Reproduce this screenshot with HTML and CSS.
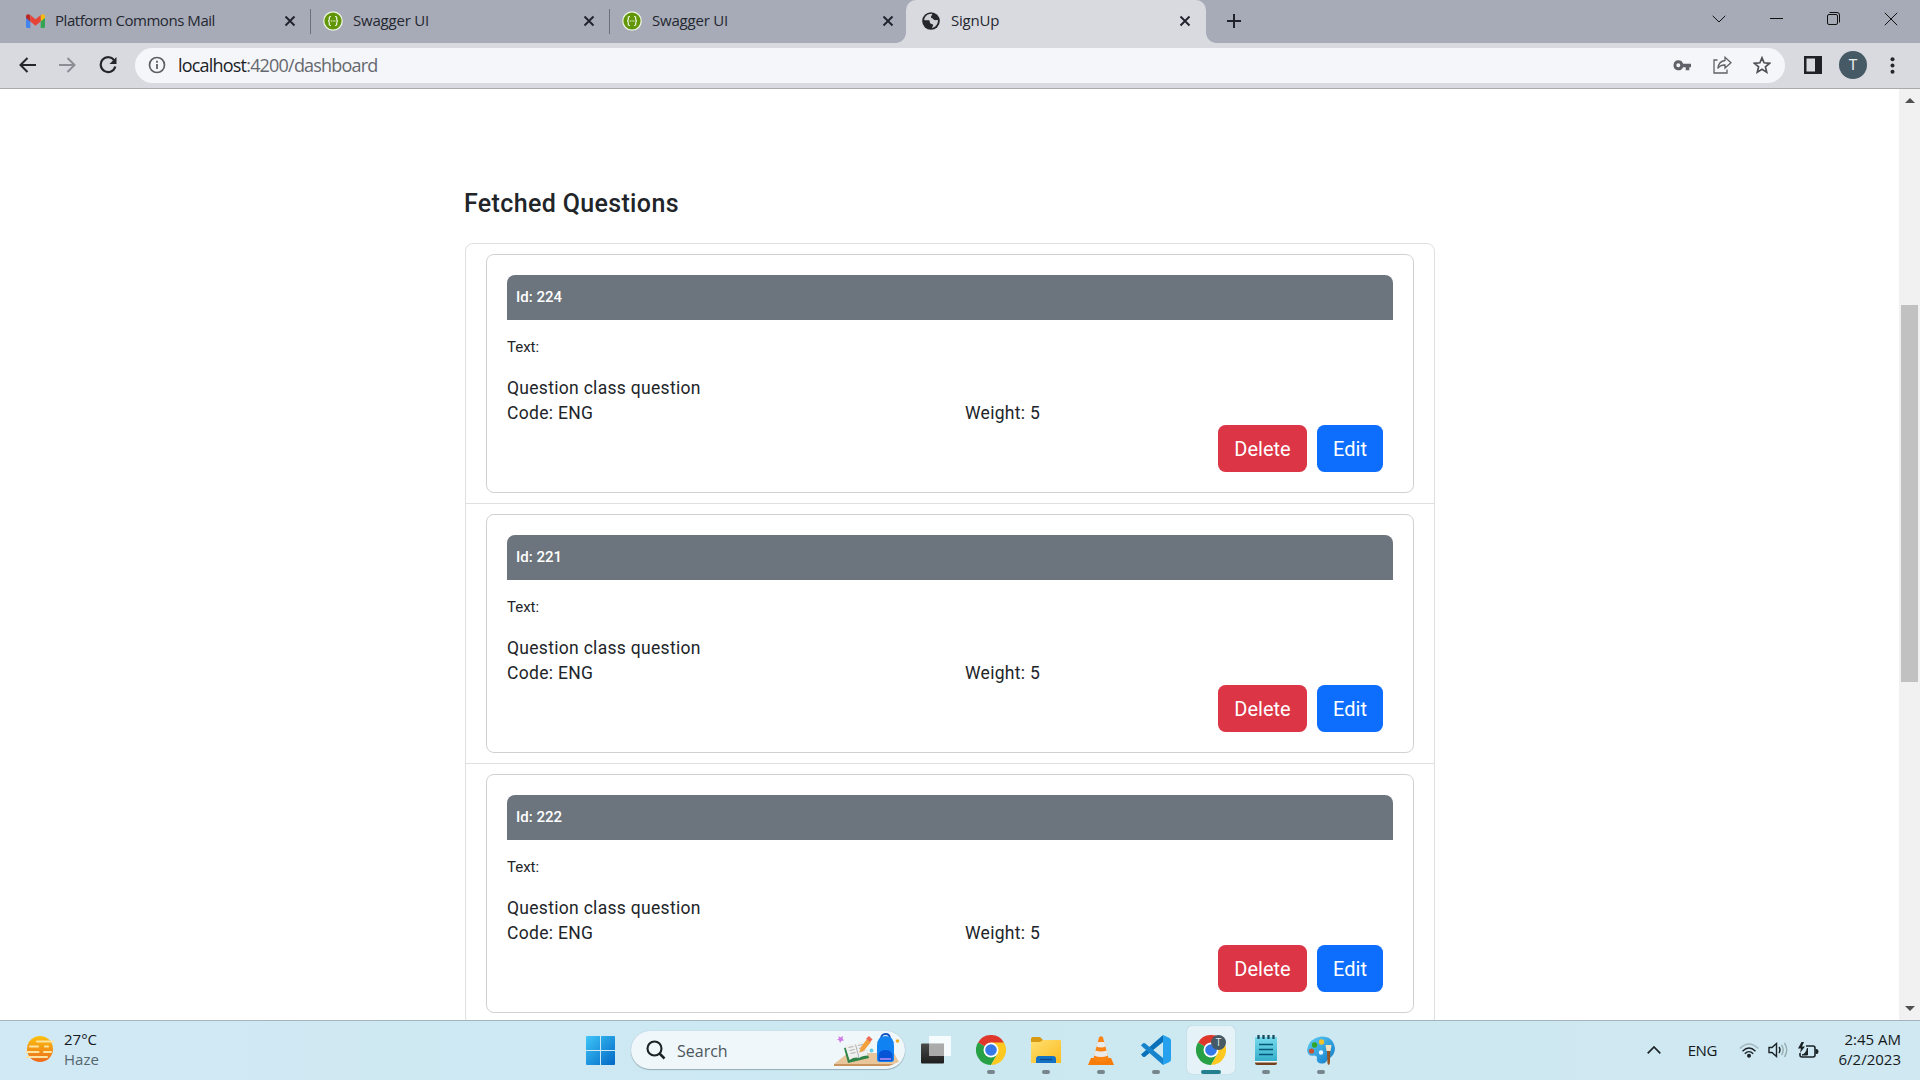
FILE: index.html
```html
<!DOCTYPE html>
<html lang="en">
<head>
<meta charset="utf-8">
<title>SignUp</title>
<link rel="stylesheet" href="styles.css">
</head>
<body>
<svg width="0" height="0" class="defs">
  <defs>
    <linearGradient id="win" gradientUnits="userSpaceOnUse" x1="0" y1="0" x2="29" y2="29"><stop offset="0" stop-color="#3fc5f8"/><stop offset="1" stop-color="#0067c5"/></linearGradient>
    <linearGradient id="sun" x1="0" y1="0" x2="0" y2="1"><stop offset="0" stop-color="#fbc10c"/><stop offset="1" stop-color="#ec6a1c"/></linearGradient>
    <linearGradient id="fold" x1="0" y1="0" x2="1" y2="1"><stop offset="0" stop-color="#ffdf70"/><stop offset="1" stop-color="#fbbd21"/></linearGradient>
    <linearGradient id="note" x1="0" y1="0" x2="0" y2="1"><stop offset="0" stop-color="#77daec"/><stop offset="1" stop-color="#35afcb"/></linearGradient>
    <linearGradient id="pal" x1="0" y1="0" x2="1" y2="1"><stop offset="0" stop-color="#5fd0f3"/><stop offset="1" stop-color="#0d78c9"/></linearGradient>
    <linearGradient id="dark" x1="0" y1="0" x2="0" y2="1"><stop offset="0" stop-color="#4a4a4a"/><stop offset="1" stop-color="#1e1e1e"/></linearGradient>
    <symbol id="close" viewBox="0 0 12 12"><path d="M1.500 1.500l9 9M10.500 1.500l-9 9" stroke="#20232c" stroke-width="1.900" fill="none"/></symbol>
    <symbol id="swagger" viewBox="0 0 20 20"><circle cx="10" cy="10" r="9.800" fill="#eef5e2"/><circle cx="10" cy="10" r="8.600" fill="#619608"/><path d="M8 5.500c-2 0-1.700 1-1.700 2.500S5.800 10 5 10c.8 0 1.300.5 1.300 2s-.3 2.500 1.700 2.500M12 5.500c2 0 1.700 1 1.700 2.500s.5 2 1.300 2c-.8 0-1.300.5-1.300 2s.3 2.500-1.700 2.500" fill="none" stroke="#f4f9ea" stroke-width="1.200"/><path d="M7.700 10h1.200m.6 0h1.200m.6 0h1.200" stroke="#f4f9ea" stroke-width="1.200"/></symbol>
    <symbol id="chrome" viewBox="0 0 30 30"><path d="M15 15L2 7.500A15 15 0 0 1 28 7.500z" fill="#e0372c"/><path d="M2 7.500A15 15 0 0 0 15 30l6.500-11.300L15 15z" fill="#27a046"/><path d="M28 7.500A15 15 0 0 1 15 30l6.500-11.300L15 7.500z" fill="#fdc921"/><circle cx="15" cy="15" r="7.500" fill="#fff"/><circle cx="15" cy="15" r="5.800" fill="#3579e8"/></symbol>
  </defs>
</svg>

<header class="browser">
  <div class="tabstrip">
    <div class="tab sep"><svg class="favicon gmail" width="19" height="14" viewBox="0 0 19 14"><path d="M0 2v10.500Q0 14 1.500 14H4.300V5z" fill="#4484ee"/><path d="M19 2v10.500q0 1.500-1.500 1.500h-2.800V5z" fill="#34a352"/><path d="M4.300 1v6.500L0 4V2Q.5-1 4.300 1z" fill="#b92824"/><path d="M14.700 1v6.500L19 4V2q-.5-3-4.300-1z" fill="#f8bb12"/><path d="M4.300 1l5.200 4.200L14.700 1v6.500l-5.200 4.200-5.200-4.200z" fill="#e64436"/></svg><span class="title t-mail">Platform Commons Mail</span><svg class="x" width="12" height="12"><use href="#close"/></svg></div>
    <div class="tab sep"><svg class="favicon" width="20" height="20"><use href="#swagger"/></svg><span class="title">Swagger UI</span><svg class="x" width="12" height="12"><use href="#close"/></svg></div>
    <div class="tab"><svg class="favicon" width="20" height="20"><use href="#swagger"/></svg><span class="title">Swagger UI</span><svg class="x" width="12" height="12"><use href="#close"/></svg></div>
    <div class="tab active"><svg class="favicon" width="18" height="18" viewBox="0 0 18 18"><circle cx="9" cy="9" r="8.800" fill="#24272c"/><path d="M10.300 1.900c-.3 1.500-1.500 2.200-1.300 3.500.2.900 2 .5 2.200 1.700.2 1.100 1.800 1 2.500 1.100.8.100 1.600-.3 2.200 0 .2 3.700-2.300 6.900-5.800 7.700-.3-1.300 1.300-1.700 1-3-.4-1.300-2.500-.7-3.100-1.900-.6-1.100.2-2.300-1-2.700-1.400-.4-3.400.3-4.800-.4C2.500 4.300 6.400 1.200 10.300 1.900z" fill="#d9dae0" opacity=".95"/><path d="M2.200 9.500c1.700.1 3.300 0 3.800 1.300.5 1.300 2.300.9 2.300 2.400 0 .8-.5 1.300-.4 2.600-3.500-.6-5.800-3.300-5.700-6.300z" fill="#24272c"/></svg><span class="title">SignUp</span><svg class="x" width="12" height="12"><use href="#close"/></svg></div>
    <svg class="plus" width="16" height="16" viewBox="0 0 16 16"><path d="M8 1v14M1 8h14" stroke="#20232c" stroke-width="2"/></svg>
    <div class="winctl">
      <svg width="14" height="8" viewBox="0 0 14 8"><path d="M.7.8L7 7 13.300.8" fill="none" stroke="#111"/></svg>
      <svg width="13" height="13" viewBox="0 0 13 13"><path d="M0 6.500h13" stroke="#111"/></svg>
      <svg width="13" height="13" viewBox="0 0 13 13"><rect x=".5" y="2.500" width="10" height="10" rx="1.500" fill="none" stroke="#111"/><path d="M2.500 .5h7.500q2.500 0 2.500 2.500v7.500" fill="none" stroke="#111"/></svg>
      <svg width="14" height="14" viewBox="0 0 14 14"><path d="M.8.8l12.400 12.400M13.200.8L.8 13.200" stroke="#111"/></svg>
    </div>
  </div>
  <div class="toolbar">
    <svg width="17" height="16" viewBox="0 0 17 16"><path d="M17 8H2M8.500 1L1.500 8l7 7" fill="none" stroke="#24262b" stroke-width="2"/></svg>
    <svg width="17" height="16" viewBox="0 0 17 16"><path d="M0 8h15M8.500 1l7 7-7 7" fill="none" stroke="#8c8e95" stroke-width="2"/></svg>
    <svg width="18" height="18" viewBox="0 0 18 18"><path d="M15.300 4.500A7.400 7.400 0 1 0 16.300 10.500" fill="none" stroke="#24262b" stroke-width="2.200"/><path d="M17.500 1v7h-7z" fill="#24262b"/></svg>
    <div class="omnibox">
      <svg width="18" height="18" viewBox="0 0 18 18"><circle cx="9" cy="9" r="7.500" fill="none" stroke="#5d5f64" stroke-width="1.700"/><path d="M9 8v5M9 4.800v1.900" stroke="#5d5f64" stroke-width="1.800"/></svg>
      <span class="url"><b>localhost</b>:4200/dashboard</span>
      <svg class="key" width="18" height="11" viewBox="0 0 18 11"><path fill-rule="evenodd" d="M5.300.3a5 5 0 0 1 4.800 3.400H18v3.600h-1.700v3h-3.600v-3h-2.600A5 5 0 1 1 5.300.3zM5.300 3.300a2 2 0 1 0 0 4 2 2 0 0 0 0-4z" fill="#5f6268"/></svg>
      <svg class="share" width="19" height="18" viewBox="0 0 19 18"><path d="M4.500 4H1v13h13v-3.500M12 1.300l6 5.400-6 5.300V9C8.500 8.800 6.400 10 4.800 12.500 5.300 8 7.600 5 12 4.500z" fill="none" stroke="#5f6268" stroke-width="1.300"/></svg>
      <svg class="star" width="18" height="18" viewBox="0 0 18 18"><path d="M9 1.800l2.100 5 5.400.5-4.100 3.500 1.300 5.300L9 13.200l-4.700 2.900 1.300-5.300L1.500 7.300l5.400-.5z" fill="none" stroke="#4f5258" stroke-width="1.700"/></svg>
    </div>
    <svg class="panel" width="18" height="18" viewBox="0 0 18 18"><path fill-rule="evenodd" d="M0 0h18v18H0zM2.500 2.500v13H11v-13z" fill="#1e2126"/></svg>
    <span class="avatar">T</span>
    <svg class="dots" width="5" height="17" viewBox="0 0 5 17"><circle cx="2.500" cy="2.300" r="2" fill="#24262b"/><circle cx="2.500" cy="8.500" r="2" fill="#24262b"/><circle cx="2.500" cy="14.700" r="2" fill="#24262b"/></svg>
  </div>
</header>

<div class="viewport">
  <main class="page">
    <h1>Fetched Questions</h1>
    <ul class="list">
      <li><article class="card"><h2>Id: 224</h2><p class="label">Text:</p><p>Question class question</p><div class="row"><span>Code: ENG</span><span>Weight: 5</span></div><div class="actions"><button class="btn delete">Delete</button><button class="btn edit">Edit</button></div></article></li>
      <li><article class="card"><h2>Id: 221</h2><p class="label">Text:</p><p>Question class question</p><div class="row"><span>Code: ENG</span><span>Weight: 5</span></div><div class="actions"><button class="btn delete">Delete</button><button class="btn edit">Edit</button></div></article></li>
      <li><article class="card"><h2>Id: 222</h2><p class="label">Text:</p><p>Question class question</p><div class="row"><span>Code: ENG</span><span>Weight: 5</span></div><div class="actions"><button class="btn delete">Delete</button><button class="btn edit">Edit</button></div></article></li>
    </ul>
  </main>
  <div class="scrollbar">
    <svg width="10" height="5" viewBox="0 0 10 5"><path d="M0 5l5-5 5 5z" fill="#505050"/></svg>
    <div class="thumb"></div>
    <svg class="down" width="10" height="5" viewBox="0 0 10 5"><path d="M0 0l5 5 5-5z" fill="#505050"/></svg>
  </div>
</div>

<footer class="taskbar">
  <div class="weather">
    <svg width="30" height="28" viewBox="0 0 30 28"><circle cx="15" cy="14" r="13" fill="url(#sun)"/><g stroke="#fbe3a0" stroke-width="2.200" stroke-linecap="round"><path d="M12 6.500h16"/><path d="M5 11.500h8M20 11.500h3" /><path d="M1.500 17h12M19 17h7"/><path d="M2 22h20"/></g></svg>
    <div><div class="temp">27°C</div><div class="cond">Haze</div></div>
  </div>
  <div class="apps">
    <span class="app"><svg width="29" height="29" viewBox="0 0 29 29"><path d="M1 0h13v14H0V1q0-1 1-1zM15 0h13q1 0 1 1v13H15zM0 15h14v14H1q-1 0-1-1zM15 15h14v13q0 1-1 1H15z" fill="url(#win)"/></svg></span>
    <div class="search">
      <svg width="20" height="20" viewBox="0 0 20 20"><circle cx="8.500" cy="8.500" r="7" fill="none" stroke="#1d2226" stroke-width="2.100"/><path d="M13.500 13.500l5 5" stroke="#1d2226" stroke-width="2.500"/></svg>
      <span>Search</span>
      <svg class="art" width="68" height="34" viewBox="0 0 68 34"><path d="M0 31L14 20h46l5 9-8 3z" fill="#e8c59b"/><path d="M0 31h60l-5 2H0z" fill="#c8935f"/><path d="M4.500 3l2 1.500L9 3l-.5 2.500 1.500 2-2.500.3L6 10 5.300 7.500 3 6.500l2-1z" fill="#cf79e6"/><path d="M10 15l20-5 5 15-21 5z" fill="#318449"/><path d="M11 12.500q7-3 10.500-1 3-3.500 9-3.500l3.500 14.500q-6 0-9 2.500-4-1.500-9.500 2z" fill="#f0f0ef"/><path d="M21.500 11.500L25 25M14.500 14.500l5-1M15.500 17.500l5-1M16.500 20.500l5-1M24 12.500l5-1M25 15.500l5-1M25.500 18.500l5-1" stroke="#9aa2a8" stroke-width=".8"/><path d="M33 6l4 3-7 8.500-4.500 2 1.200-5z" fill="#f2a13c"/><path d="M35 3l3.500 3.500L36 9l-4-3.300z" fill="#ec6b57"/><path d="M47 6q0-5 4.500-5T56 6" fill="none" stroke="#1253c1" stroke-width="1.800"/><path d="M43 13q0-10 8.500-10T60 13v13q0 3-3 3H46q-3 0-3-3z" fill="#1182f1"/><path d="M44.500 22q1-5 7-5t7 5v6h-14z" fill="#0755d7"/><path d="M46 26h11" stroke="#bf8ff4" stroke-width="1.500"/><circle cx="37.500" cy="17.500" r="1.900" fill="#62cbe8"/><circle cx="63.500" cy="8" r="1.800" fill="#eeac22"/></svg>
    </div>
    <span class="app"><svg width="30" height="28" viewBox="0 0 30 28"><rect x="0" y="7.500" width="23" height="20" rx="1" fill="url(#dark)"/><rect x="8" y="0" width="22" height="20" rx="1" fill="#fff" opacity=".82"/><path d="M8 7.500h15V20H8z" fill="#999" opacity=".75"/></svg></span>
    <span class="app run"><svg width="30" height="30"><use href="#chrome"/></svg></span>
    <span class="app run"><svg width="30" height="28" viewBox="0 0 30 28"><path d="M0 10V3q0-2 2-2h7l3 3v6z" fill="#d99a13"/><path d="M0 6h9l3-2h17q1 0 1 1v22H0z" fill="url(#fold)"/><path d="M5 27v-4q0-3 3-3h14q3 0 3 3v4z" fill="#1472c4"/><path d="M9 23.500h12" stroke="#0a4c8d" stroke-width="1.300"/></svg></span>
    <span class="app run"><svg width="26" height="29" viewBox="0 0 26 29"><path d="M3 22h20l3 7H0z" fill="#f77c0a"/><path d="M11 1.500q2-2.500 4 0L21 24q-8 4-16 0z" fill="#f98313"/><path d="M9.600 6h6.800l1.200 4.500q-4.500 2-9.200 0zM7.400 14.500q5.600 2 11.200 0l1.400 5q-7 3-14 0z" fill="#eaeaea"/></svg></span>
    <span class="app run"><svg width="30" height="30" viewBox="0 0 30 30"><path d="M0 19.500l2 2.200q1 .6 2 0L22 7V0L.5 19z" fill="#0871b9"/><path d="M0 10.500l2-2.200q1-.6 2 0L22 23v7L.5 11z" fill="#1684cc"/><path d="M22 0l6.500 3Q30 4 30 5.500v19q0 1.500-1.500 2.500L22 30z" fill="#26a1ee"/></svg></span>
    <span class="app run current"><svg width="30" height="30" viewBox="0 0 30 30"><use href="#chrome" width="30" height="30"/></svg><i class="badge">T</i></span>
    <span class="app run"><svg width="22" height="30" viewBox="0 0 22 30"><path d="M0 2h22v24H0z" fill="url(#note)"/><path d="M0 26.500h22V28q0 2-2 2H2q-2 0-2-2z" fill="#70411c"/><path d="M0 26h22v1.500H0z" fill="#f4f7f7"/><path d="M4 9.500h14M4 14.500h14M4 19.500h14" stroke="#075777" stroke-width="1.600"/><path d="M3.500 0v4M8.500 0v4M13.500 0v4M18.500 0v4" stroke="#174b60" stroke-width="2.300"/></svg></span>
    <span class="app run"><svg width="30" height="30" viewBox="0 0 30 30"><path d="M1 15Q3 3 15 1.500 27 1 29 13q0 6-5 10-3 1.500-4 4-2 2.500-7 1-3-2-2-5 0-2.500-3-2.500-6 1.500-7-5.500z" fill="url(#pal)"/><circle cx="8.500" cy="10" r="2.700" fill="#31a628"/><circle cx="15.500" cy="7" r="2.700" fill="#f2c22b"/><circle cx="5.500" cy="16" r="2.600" fill="#ca5230"/><circle cx="15" cy="17.500" r="2.200" fill="#e9f8ff"/><path d="M19.500 10h6l-1 6h-4z" fill="#f2dfbe"/><path d="M21 16h3.300l-.4 12q-1.200 4-2.500 0z" fill="#925625"/></svg></span>
  </div>
  <div class="tray">
    <svg class="chev" width="14" height="8" viewBox="0 0 14 8"><path d="M.7 7.300L7 1l6.300 6.300" fill="none" stroke="#1b2327" stroke-width="1.700"/></svg>
    <span class="lang">ENG</span>
    <svg class="wifi" width="20" height="15" viewBox="0 0 20 15"><g fill="none" stroke="#1b2327" stroke-width="1.400"><path d="M.7 5.500Q10-3.500 19.300 5.500" opacity=".25"/><path d="M3.500 8.200Q10 2 16.500 8.200"/><path d="M5.800 10.800Q10 6.500 14.200 10.800"/></g><circle cx="10" cy="12.700" r="2" fill="#1b2327"/></svg>
    <svg class="vol" width="20" height="16" viewBox="0 0 20 16"><g fill="none" stroke="#1b2327" stroke-width="1.400"><path d="M1 5.500h3L8.500 1.500v13L4 10.500H1z"/><path d="M11 5q2 3 0 6"/><path d="M13.500 3q3.500 5 0 10M16.500 1q4.500 7 0 14" opacity=".3"/></g></svg>
    <svg class="bat" width="21" height="17" viewBox="0 0 21 17"><path d="M8 4h7q2 0 2 2v7q0 2-2 2H4q-2 0-2-2V11" fill="none" stroke="#1b2327" stroke-width="1.600"/><path d="M9.500 6v7H4q4-1 5.500-7z" fill="#1b2327" stroke="#1b2327"/><path d="M17.500 7h1q2 0 2 2.500t-2 2.500h-1z" fill="#1b2327"/><path d="M3.500 0L0 6.500h3L2 11l5-6.500H4L6 0z" fill="#1b2327"/></svg>
    <div class="clock"><div class="time">2:45 AM</div><div class="date">6/2/2023</div></div>
  </div>
</footer>
</body>
</html>
```
FILE: styles.css
```css
* { box-sizing: border-box; }
html, body { height: 100%; }
body {
  margin: 0;
  overflow: hidden;
  display: flex;
  flex-direction: column;
  background: #fff;
  font-family: Roboto, sans-serif;
  color: #212529;
}
svg { display: block; flex: none; }

/* Browser chrome */
.browser { flex: none; font-family: "Open Sans", "Noto Sans", sans-serif; }
.tabstrip {
  display: flex;
  height: 43px;
  background: #a7abb8;
  padding-left: 12px;
}
.tab {
  display: flex;
  align-items: center;
  width: 299px;
  height: 43px;
  padding: 0 15px 2px 12px;
  font-size: 15px;
  color: #24272f;
}
.tab.sep {
  background: linear-gradient(#6c707c, #6c707c) 100% 9px / 1px 25px no-repeat;
}
.tab .favicon { margin-right: 10px; }
.tab .gmail { margin: 0 10px 0 2px; }
.tab .title { flex: 1; padding-bottom: 2px; letter-spacing: -0.2px; white-space: nowrap; }
.tab .t-mail { letter-spacing: -0.45px; }
.tab.active {
  position: relative;
  width: 300px;
  margin-left: -3px;
  padding-left: 16px;
  background: #d9dae0;
  border-radius: 10px 10px 0 0;
}
.tab.active .favicon { margin-right: 11px; }
.tab.active::before,
.tab.active::after {
  content: "";
  position: absolute;
  bottom: 0;
  width: 10px;
  height: 10px;
}
.tab.active::before { left: -10px; background: radial-gradient(circle at 0 0, transparent 9.500px, #d9dae0 10px); }
.tab.active::after { right: -10px; background: radial-gradient(circle at 100% 0, transparent 9.500px, #d9dae0 10px); }
.plus { margin: 13px 0 0 20px; }
.winctl {
  display: flex;
  align-items: center;
  gap: 44px;
  height: 37px;
  margin-left: auto;
  padding-right: 22px;
}
.toolbar {
  display: flex;
  align-items: center;
  height: 46px;
  padding: 0 20px 1px 19px;
  background: #d9dae0;
  border-bottom: 1px solid #a9aaae;
}
.toolbar > svg:nth-child(-n+2) { margin-right: 23px; }
.toolbar > svg:nth-child(3) { margin-right: 18px; }
.omnibox {
  display: flex;
  align-items: center;
  width: 1650px;
  height: 35px;
  padding: 0 14px 0 13px;
  border-radius: 18px;
  background: #f5f6f9;
}
.url { flex: 1; margin-left: 12px; font-size: 18px; letter-spacing: -0.8px; color: #65686e; }
.url b { font-weight: 400; color: #202227; }
.share { margin-left: 22px; }
.star { margin-left: 21px; }
.panel { margin-left: 19px; }
.avatar {
  width: 28px;
  height: 28px;
  margin-left: 17px;
  border-radius: 50%;
  background: #455a64;
  color: #e8edef;
  font: 15px/28px Roboto, sans-serif;
  text-align: center;
}
.dots { margin-left: 23px; }

/* Page */
.viewport { display: flex; flex: 1; min-height: 0; overflow: hidden; }
.page { flex: 1; padding: 96px 0 0 464px; }
h1 { margin: 0; font-size: 25px; line-height: 38px; font-weight: 500; letter-spacing: 0.35px; }
.list {
  width: 970px;
  margin: 20px 0 0 1px;
  padding: 0;
  list-style: none;
  border: 1px solid #dfdfdf;
  border-radius: 8px;
}
.list li { padding: 10px 20px; border-bottom: 1px solid #dfdfdf; }
.card {
  height: 239px;
  padding: 20px;
  border: 1px solid #d0d1d2;
  border-radius: 8px;
  font-size: 17.500px;
  line-height: 25px;
  letter-spacing: 0.3px;
}
.card h2 {
  height: 45px;
  margin: 0 0 15px;
  padding: 0 9px;
  border-radius: 8px 8px 0 0;
  background: #6c757d;
  color: #fff;
  font-size: 15px;
  font-weight: 500;
  line-height: 44px;
  letter-spacing: 0;
}
.card p { margin: 0; }
.card .label { margin-bottom: 16px; font-size: 15px; letter-spacing: 0; }
.row { display: grid; grid-template-columns: 458px 1fr; }
.actions { display: flex; justify-content: flex-end; gap: 10px; margin-top: -1px; padding-right: 10px; }
.btn {
  height: 47px;
  padding: 0;
  border: 0;
  border-radius: 7.500px;
  color: #fff;
  font: 400 20px Roboto, sans-serif;
}
.delete { width: 89px; background: #dc3545; }
.edit { width: 66px; background: #0d6efd; }
.scrollbar {
  display: flex;
  flex-direction: column;
  align-items: center;
  width: 21px;
  padding: 9px 0;
  background: #f1f1f1;
}
.thumb { width: 17px; height: 377px; margin-top: 202px; background: #c1c1c1; }
.down { margin-top: auto; }

/* Taskbar */
.defs { position: absolute; }
.taskbar {
  display: flex;
  flex: none;
  height: 60px;
  border-top: 1px solid #a3b4ba;
  background: linear-gradient(90deg, #d1e9f4, #cbe8f1 50%, #d0e8f1);
  font-family: "Open Sans", "Noto Sans", sans-serif;
  font-size: 15px;
  line-height: 20px;
  color: #14191c;
}
.weather { display: flex; width: 576px; padding: 8px 0 0 25px; gap: 9px; }
.weather svg { margin-top: 6px; }
.cond { color: #54666e; }
.apps { display: flex; align-items: center; gap: 7px; height: 58px; }
.app {
  position: relative;
  display: flex;
  align-items: center;
  justify-content: center;
  width: 48px;
  height: 48px;
  border-radius: 5px;
}
.app.run::after {
  content: "";
  position: absolute;
  bottom: 0;
  width: 8px;
  height: 4px;
  border-radius: 2px;
  background: #76868c;
}
.app.current { background: #e5f3f9; box-shadow: 0 0 1px #a0b5bd; }
.app.current::after { width: 20px; background: #24808f; }
.badge {
  position: absolute;
  top: 9px;
  right: 9px;
  width: 15px;
  height: 15px;
  border-radius: 50%;
  background: #455a64;
  color: #dde4e7;
  font: 10px/15px Roboto, sans-serif;
  text-align: center;
}
.search {
  display: flex;
  align-items: center;
  width: 274px;
  height: 38px;
  padding: 0 3px 0 15px;
  border-radius: 19px;
  background: #eff7fb;
  box-shadow: 0 1px 1px #93abb5, 0 0 1px #a5bac2;
  font-size: 16px;
  color: #4c565b;
}
.search span { flex: 1; margin-left: 11px; padding-top: 1px; }
.tray { display: flex; align-items: center; height: 58px; margin-left: auto; padding-right: 19px; }
.lang { margin-left: 27px; letter-spacing: -0.4px; }
.wifi { margin-left: 22px; }
.vol { margin-left: 9px; }
.bat { margin-left: 10px; }
.clock { width: 66px; margin: -2px 0 0 16px; text-align: right; white-space: nowrap; }
```
